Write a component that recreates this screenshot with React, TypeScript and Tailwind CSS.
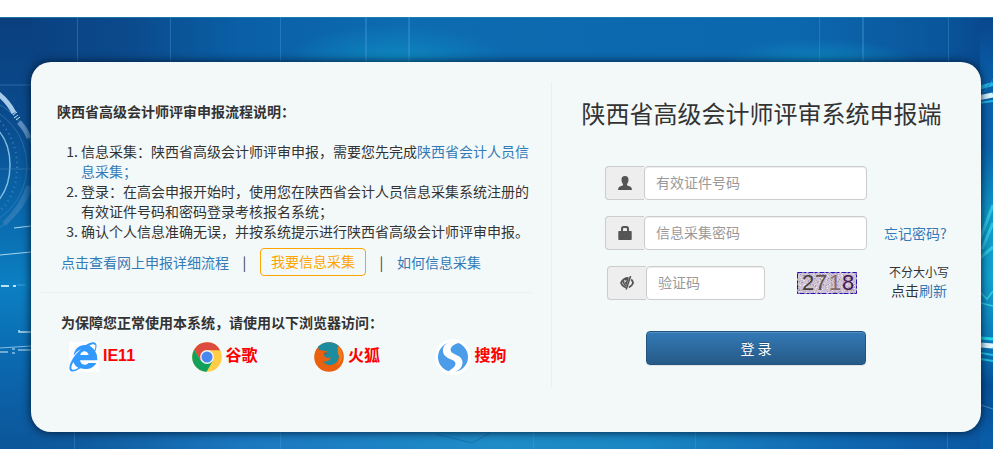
import type { ReactNode } from 'react';

function Backdrop() {
  return (
    <svg
      className="absolute inset-0 h-full w-full"
      viewBox="0 0 993 432"
      preserveAspectRatio="none"
      aria-hidden="true"
    >
      <defs>
        <linearGradient id="top" x1="0" x2="1" y1="0" y2="0">
          <stop offset="0" stopColor="#0a3f7e" />
          <stop offset="0.13" stopColor="#0b4a8c" />
          <stop offset="0.24" stopColor="#0a5fa6" />
          <stop offset="0.4" stopColor="#0d6bb0" />
          <stop offset="0.8" stopColor="#0c68ae" />
          <stop offset="0.95" stopColor="#0a559b" />
          <stop offset="1" stopColor="#08468c" />
        </linearGradient>
        <linearGradient id="left" x1="0" x2="0" y1="0" y2="1">
          <stop offset="0" stopColor="#0a3f7e" />
          <stop offset="0.25" stopColor="#0a4c8e" />
          <stop offset="0.45" stopColor="#0a68ac" />
          <stop offset="0.62" stopColor="#0b80c2" />
          <stop offset="0.8" stopColor="#0b68af" />
          <stop offset="1" stopColor="#0c5599" />
        </linearGradient>
        <linearGradient id="right" x1="0" x2="0" y1="0" y2="1">
          <stop offset="0" stopColor="#08468c" />
          <stop offset="0.17" stopColor="#0a62ad" />
          <stop offset="0.3" stopColor="#0b63ae" />
          <stop offset="0.45" stopColor="#0d96c8" />
          <stop offset="0.6" stopColor="#12a3d0" />
          <stop offset="0.75" stopColor="#0b7cbc" />
          <stop offset="0.85" stopColor="#07509a" />
          <stop offset="1" stopColor="#0a5ea8" />
        </linearGradient>
        <linearGradient id="bottom" x1="0" x2="1" y1="0" y2="0">
          <stop offset="0" stopColor="#0c5599" />
          <stop offset="0.08" stopColor="#0f5a9e" />
          <stop offset="0.25" stopColor="#1b78bf" />
          <stop offset="0.5" stopColor="#1e8cc7" />
          <stop offset="0.65" stopColor="#1a86c3" />
          <stop offset="0.85" stopColor="#1068b0" />
          <stop offset="1" stopColor="#0a56a0" />
        </linearGradient>
        <radialGradient id="glow">
          <stop offset="0" stopColor="#0e93c6" stopOpacity="0.7" />
          <stop offset="1" stopColor="#0e93c6" stopOpacity="0" />
        </radialGradient>
      </defs>
      <rect width="993" height="220" fill="url(#top)" />
      <rect y="220" width="993" height="212" fill="url(#bottom)" />
      <rect width="32" height="432" fill="url(#left)" />
      <rect x="980" width="13" height="432" fill="url(#right)" />
      <ellipse cx="395" cy="42" rx="110" ry="34" fill="url(#glow)" />
      <ellipse cx="820" cy="46" rx="100" ry="24" fill="url(#glow)" />
      <rect width="993" height="1" fill="#1f7fae" opacity="0.8" />
      <g fill="#4ba3dc" opacity="0.35">
        <rect x="77" width="1" height="46" />
        <rect x="170" width="1" height="46" />
        <rect x="280" width="1" height="46" />
        <rect x="365" width="2" height="46" />
        <rect x="408" width="2" height="46" />
        <rect x="819" width="1" height="46" />
        <rect x="862" width="2" height="46" />
        <rect x="948" width="1" height="46" />
        <rect x="74" y="415" width="1" height="17" />
        <rect x="280" y="415" width="1" height="17" />
        <rect x="533" y="415" width="1" height="17" />
        <rect x="695" y="415" width="1" height="17" />
        <rect x="947" y="415" width="1" height="17" />
      </g>
      <g fill="none">
        <circle cx="-36" cy="149" r="71" stroke="#4d9fd0" strokeWidth="1" opacity="0.5" />
        <circle cx="-36" cy="149" r="63" stroke="#3b86bd" strokeWidth="1" opacity="0.6" />
        <path d="M-4 75Q8 84 14 96" stroke="#a9cbea" strokeWidth="5" />
        <path d="M13 98l4-3M14 101l4-3M16 103l4-3" stroke="#c5dcf0" strokeWidth="1" />
        <path d="M19 105Q27 114 29 121" stroke="#6d9ccc" strokeWidth="5" opacity="0.8" />
        <path d="M29 169Q22 190 4 207" stroke="#347fb9" strokeWidth="5" opacity="0.75" />
        <path d="M-2 113Q10 126 10 148T-2 184" stroke="#94ceea" strokeWidth="1.5" opacity="0.85" />
        <path d="M0 104Q18 125 17 152T-1 195" stroke="#4a94ca" strokeWidth="2" strokeDasharray="1 4" opacity="0.7" />
        <path d="M0 68h31M0 152h31" stroke="#3e82ba" strokeWidth="1" opacity="0.6" />
        <path d="M14 211l17-2M0 238l31-3" stroke="#a6d7ef" strokeWidth="1.2" />
        <path d="M1 269h8M13 269h3" stroke="#bce2f4" strokeWidth="2" />
        <path d="M17 268h8" stroke="#469fd1" strokeWidth="1" />
        <path d="M19 313v2h12" stroke="#b6dcf2" strokeWidth="1.5" />
        <path d="M0 331l31-2" stroke="#7fc1e6" strokeWidth="1" />
        <path d="M0 335h8M12 332h3M12 336h3M18 333h13" stroke="#9ecdea" strokeWidth="2" opacity="0.65" />
        <path d="M978 71l15-4" stroke="#22b9e8" strokeWidth="4" />
        <path d="M978 81l15-3" stroke="#d6f8ff" strokeWidth="5" />
        <path d="M978 86l15-2" stroke="#26b7e7" strokeWidth="2" />
        <path d="M984 75l9-13" stroke="#1686cb" strokeWidth="1" />
        <path d="M980 222L993 188M982 232L993 206M979 242L993 230" stroke="#41ddec" strokeWidth="3" opacity="0.65" />
        <path d="M980 275l7 7 6-8M981 286l12 3" stroke="#33d0e1" strokeWidth="1.5" />
        <path d="M981 321l12 1" stroke="#1edbea" strokeWidth="3" />
        <path d="M981 328l12 1" stroke="#e2faff" strokeWidth="5" />
        <path d="M981 336l12 2M981 342l12 2" stroke="#25bfe0" strokeWidth="2" />
        <path d="M981 388l12 4" stroke="#4d8ac0" strokeWidth="1" />
        <path d="M436 417l36 9 18-10" stroke="#0f5f98" strokeWidth="1" opacity="0.5" />
      </g>
    </svg>
  );
}

function IeIcon() {
  return (
    <svg className="size-[30px] shrink-0 bg-white" viewBox="0 0 30 30" aria-hidden="true">
      <path
        fill="#3399ff"
        d="M28.2 18.2c.4-3.6-.4-6.6-2-8.8 1.7-4 1.8-7 .3-8.4-2-1.8-6-.4-9.8 1.9C10.200 2.500 5.200 7 4.600 13.600 7 10.500 9.600 8.300 12.200 7 7.200 11.200 2.900 17 1 22.600c-1.300 4.300-.3 6.700 2 7 2.300.2 5.300-1.200 8.300-3.300 7 2.200 13.700-.6 16-5.400h-8c-1.800 3-7.600 2.500-8.300-2.700zM11.300 13c.8-5 7.400-5 8.300 0zM20.300 3.700c2.800-1.500 5-1.800 5.800-.7.700 1 .3 2.900-.6 5.200-1.300-2-3-3.500-5.200-4.500zM4.300 20c1 2.600 2.700 4.600 5 5.700-2.900 1.900-5.300 2.700-6.400 1.600-1.100-1-.5-3.900 1.400-7.300z"
      />
    </svg>
  );
}

function ChromeIcon() {
  return (
    <svg className="size-[30px] shrink-0" viewBox="0 0 30 30" aria-hidden="true">
      <circle cx="15" cy="15" r="14.800" fill="#ffcd46" />
      <path fill="#12a05d" d="M2.200 7.500A14.800 14.800 0 0 0 14.600 29.800L21 18.500 15 15 8.900 18.500z" />
      <path fill="#dd4b3e" d="M2.200 7.500A14.800 14.800 0 0 1 28 8.200H15L8.900 18.500z" />
      <circle cx="15" cy="15" r="6.900" fill="#f4f4f4" />
      <circle cx="15" cy="15" r="5.500" fill="#4887f2" />
    </svg>
  );
}

function FirefoxIcon() {
  return (
    <svg className="size-[30px] shrink-0" viewBox="0 0 30 30" aria-hidden="true">
      <circle cx="15" cy="15" r="14.800" fill="#e9600f" />
      <path
        fill="#1c8d9f"
        d="M4 4.500Q9 .2 15 .2 21 .2 25 4l-2 2 2 4-1 2 1 2q-1 6-5 8-5 2.500-9-.5l-2-2q4 .5 6.500-1.500l1.500-2.500-4 .5-3-2 .5-2.500 3.500-2Q10.500 9 9 8.500L5 8z"
      />
      <path fill="#f07d1c" d="M24.500 4q4 5 3.800 11-1.500 7-6 9 3.500-4 3.200-9l-2-5z" />
      <path fill="#8d4a2c" d="M10.500 10.500l2.500.5-1 1.500-2-.5z" />
    </svg>
  );
}

function SogouIcon() {
  return (
    <svg className="size-9 shrink-0" viewBox="0 0 36 36" aria-hidden="true">
      <circle cx="18" cy="18" r="18" fill="#fff" />
      <circle cx="18" cy="18" r="15" fill="#4b9de9" />
      <path
        fill="#fff"
        d="M22 1.500C12 1.500 7.200 7 8 12.500c.6 5 5 6.500 9 8.300 5 2.200 4 5.700 1 8.200-2 1.600-4 2.700-6 4.500 9 1.500 16-4 15.500-10.500-.3-5-5.500-6.600-9-8.500-4-2.200-3.500-5.500-.5-8 2-1.700 5.500-2.500 8-3z"
      />
    </svg>
  );
}

function UserIcon() {
  return (
    <svg width="14" height="14" viewBox="0 0 14 14" fill="#555" aria-hidden="true">
      <path d="M7 0C4.500 0 3.400 1.600 3.500 3.900 3.600 6 4.400 7.200 5 8v1.200L1.400 10.800Q0 11.500 0 14h14q0-2.500-1.400-3.200L9 9.200V8c.6-.8 1.400-2 1.500-4.100C10.600 1.600 9.500 0 7 0z" />
    </svg>
  );
}

function LockIcon() {
  return (
    <svg width="14" height="14" viewBox="0 0 14 14" fill="#555" aria-hidden="true">
      <path
        fillRule="evenodd"
        d="M1 5h2V2.500Q3 0 5.500 0h3Q11 0 11 2.500V5h2q.7 0 .7.700v7.600q0 .7-.7.700H1q-.7 0-.7-.7V5.700Q.3 5 1 5zm4 0h4V3q0-1-1-1H6Q5 2 5 3z"
      />
    </svg>
  );
}

function EyeIcon() {
  return (
    <svg width="14" height="14" viewBox="0 0 14 14" aria-hidden="true">
      <g fill="none" stroke="#555" strokeWidth="1.800">
        <path d="M8.500 2Q3.500 1.800 1 7q1.500 3.500 5 4.500" />
        <path d="M11.200 3.300Q12.700 4.700 13.100 7q-1.200 3.200-4.300 4.400" />
        <path d="M3.600 4.500q-.6 4 3 5.400" strokeWidth="1.400" />
        <path d="M10.600 0L6.200 13.500" strokeWidth="1.600" />
      </g>
      <path d="M5 3l3.800-.8L6.800 9 4.600 7.500z" fill="#555" />
      <path d="M5 4.500l1.600-.2-1 2.400z" fill="#eee" />
    </svg>
  );
}

const specks = Array.from({ length: 420 }, (_, i) => ({
  x: (i * 37 + ((i * i) % 23)) % 60,
  y: (i * 13 + ((i * i * 7) % 19)) % 22,
  fill: ['#9a90c0', '#e3d6e4', '#bfae9f', '#a49cb8', '#d8c4a9', '#f0e9f5'][(i * 5 + (i % 7)) % 6],
}));

function Captcha() {
  return (
    <svg
      className="shrink-0 overflow-visible"
      width="60"
      height="22"
      viewBox="0 0 60 22"
      role="img"
      aria-label="2718"
    >
      <rect width="60" height="22" fill="#cdc2d3" />
      {specks.map((s, i) => (
        <rect key={i} x={s.x} y={s.y} width="1" height="1" fill={s.fill} />
      ))}
      <rect x="0.500" y="0.500" width="59" height="21" fill="none" stroke="#2a12b4" strokeDasharray="5 1 3 2" />
      <g fontFamily="'Liberation Sans', sans-serif" fontSize="22">
        <text x="5" y="18" fill="#45403f">2</text>
        <text x="18" y="18" fill="#65534e">7</text>
        <text x="32" y="18" fill="#8a6870">1</text>
        <text x="45" y="18" fill="#451855">8</text>
      </g>
    </svg>
  );
}

function Browser({ icon, name, pad = 'pl-7' }: { icon: ReactNode; name: string; pad?: string }) {
  return (
    <li className={`flex items-center gap-1 ${pad}`}>
      {icon}
      <span className="pb-0.5 font-['Liberation_Sans','Noto_Sans_CJK_SC',sans-serif] text-base leading-5 font-bold text-[#f00]">
        {name}
      </span>
    </li>
  );
}

function Field({ id, label, icon, type = 'text' }: { id: string; label: string; icon: ReactNode; type?: string }) {
  return (
    <div className="flex h-[34px] min-w-0 flex-1">
      <label
        htmlFor={id}
        aria-label={label}
        className="flex w-[39px] shrink-0 items-center justify-center rounded-l border border-r-0 border-[#ccc] bg-[#eee]"
      >
        {icon}
      </label>
      <input
        id={id}
        type={type}
        placeholder={label}
        className="w-full min-w-0 rounded border border-[#ccc] bg-white px-[11px] pb-0.5 text-sm text-[#555] shadow-[inset_0_1px_1px_rgba(0,0,0,0.075)] outline-none placeholder:text-[#999]"
      />
    </div>
  );
}

const link = 'text-[#337ab7] hover:underline';

export default function App() {
  return (
    <div className="bg-white pt-[17px] font-['Noto_Sans_CJK_SC',sans-serif] text-sm leading-5 text-[#333]">
      <main className="relative pt-[45px] pr-3 pb-[17px] pl-[31px]">
        <Backdrop />
        <div className="relative flex rounded-[20px] bg-[#f3f9f9] px-[10px] pt-5 pb-[45px] shadow-[0_0_10px_#001a33]">
          <section className="flex-1 border-r border-[#e9eeee] pr-5 pb-3">
            <h2 className="mt-[19px] pl-4 font-bold">陕西省高级会计师评审申报流程说明：</h2>
            <ol className="mt-5 list-decimal pl-10">
              <li>
                信息采集：陕西省高级会计师评审申报，需要您先完成
                <a href="#collect" className={link}>陕西省会计人员信息采集；</a>
              </li>
              <li>登录：在高会申报开始时，使用您在陕西省会计人员信息采集系统注册的有效证件号码和密码登录考核报名系统；</li>
              <li>确认个人信息准确无误，并按系统提示进行陕西省高级会计师评审申报。</li>
            </ol>
            <div className="mt-[7px] flex items-center gap-[13px] border-b border-[#ebeeee] pb-4 pl-5">
              <a href="#flow" className={link}>点击查看网上申报详细流程</a>
              <span className="w-[5px] text-center">|</span>
              <button type="button" className="h-7 rounded border border-[#ffa500] px-[10px] pb-0.5 text-[#ffa500]">
                我要信息采集
              </button>
              <span className="w-[5px] text-center">|</span>
              <a href="#how" className={link}>如何信息采集</a>
            </div>
            <h3 className="mt-[19px] pl-5 font-bold">为保障您正常使用本系统，请使用以下浏览器访问：</h3>
            <ul className="mt-[7px] grid grid-cols-4">
              <Browser icon={<IeIcon />} name="IE11" />
              <Browser icon={<ChromeIcon />} name="谷歌" />
              <Browser icon={<FirefoxIcon />} name="火狐" />
              <Browser icon={<SogouIcon />} name="搜狗" pad="pl-[26px]" />
            </ul>
          </section>
          <section className="w-[419px] shrink-0">
            <h1 className="mt-[15px] text-center text-2xl leading-8">陕西省高级会计师评审系统申报端</h1>
            <form className="mt-[37px] flex flex-col gap-4 pl-[53px]" onSubmit={(e) => e.preventDefault()}>
              <div className="flex w-[262px]">
                <Field id="account" label="有效证件号码" icon={<UserIcon />} />
              </div>
              <div className="flex items-center gap-[17px]">
                <div className="flex w-[262px]">
                  <Field id="password" label="信息采集密码" type="password" icon={<LockIcon />} />
                </div>
                <a href="#forgot" className={link}>忘记密码?</a>
              </div>
              <div className="flex h-[34px] items-center gap-8 pl-0.5">
                <div className="flex w-[158px]">
                  <Field id="code" label="验证码" icon={<EyeIcon />} />
                </div>
                <Captcha />
                <p className="pb-1 text-center leading-[19px]">
                  <span className="block text-xs leading-[19px]">不分大小写</span>
                  点击<a href="#refresh" className={link}>刷新</a>
                </p>
              </div>
              <button
                type="submit"
                className="mt-[15px] ml-[41px] h-[34px] w-[220px] rounded border border-[#245580] bg-linear-to-b from-[#337ab7] to-[#265a88] text-white shadow-[inset_0_1px_0_rgba(255,255,255,0.15),0_1px_1px_rgba(0,0,0,0.075)] text-shadow-[0_-1px_0_rgba(0,0,0,0.2)]"
              >
                登 录
              </button>
            </form>
          </section>
        </div>
      </main>
    </div>
  );
}
